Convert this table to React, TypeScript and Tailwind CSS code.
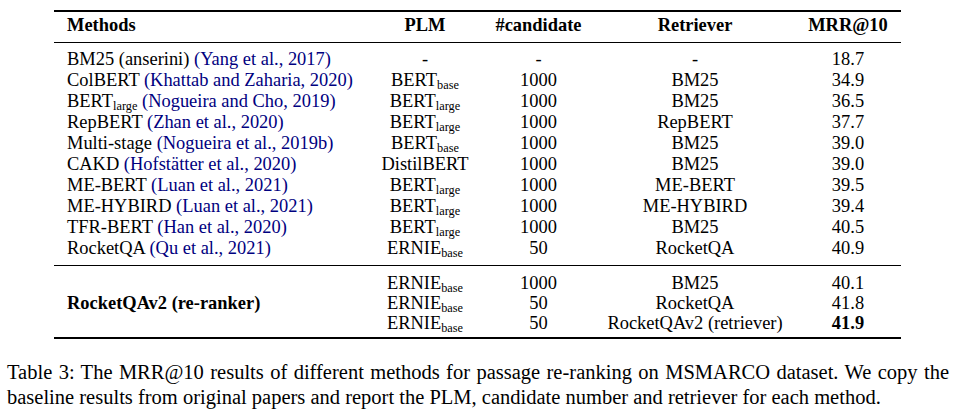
import React from "react";

interface Row {
  method: React.ReactNode;
  cite?: string;
  plm: React.ReactNode;
  cand: string;
  retriever: string;
  mrr: string;
}

const Sub = ({ children }: { children: React.ReactNode }) => (
  <span className="text-[12.3px] leading-[0] align-[-3px]">{children}</span>
);

const Plm = ({ name, sub }: { name: string; sub?: string }) => (
  <span>
    {name}
    {sub && <Sub>{sub}</Sub>}
  </span>
);

const baselines: Row[] = [
  { method: "BM25 (anserini)", cite: "Yang et al., 2017", plm: "-", cand: "-", retriever: "-", mrr: "18.7" },
  { method: "ColBERT", cite: "Khattab and Zaharia, 2020", plm: <Plm name="BERT" sub="base" />, cand: "1000", retriever: "BM25", mrr: "34.9" },
  {
    method: (
      <span>
        BERT<Sub>large</Sub>
      </span>
    ),
    cite: "Nogueira and Cho, 2019",
    plm: <Plm name="BERT" sub="large" />,
    cand: "1000",
    retriever: "BM25",
    mrr: "36.5",
  },
  { method: "RepBERT", cite: "Zhan et al., 2020", plm: <Plm name="BERT" sub="large" />, cand: "1000", retriever: "RepBERT", mrr: "37.7" },
  { method: "Multi-stage", cite: "Nogueira et al., 2019b", plm: <Plm name="BERT" sub="base" />, cand: "1000", retriever: "BM25", mrr: "39.0" },
  { method: "CAKD", cite: "Hofstätter et al., 2020", plm: "DistilBERT", cand: "1000", retriever: "BM25", mrr: "39.0" },
  { method: "ME-BERT", cite: "Luan et al., 2021", plm: <Plm name="BERT" sub="large" />, cand: "1000", retriever: "ME-BERT", mrr: "39.5" },
  { method: "ME-HYBIRD", cite: "Luan et al., 2021", plm: <Plm name="BERT" sub="large" />, cand: "1000", retriever: "ME-HYBIRD", mrr: "39.4" },
  { method: "TFR-BERT", cite: "Han et al., 2020", plm: <Plm name="BERT" sub="large" />, cand: "1000", retriever: "BM25", mrr: "40.5" },
  { method: "RocketQA", cite: "Qu et al., 2021", plm: <Plm name="ERNIE" sub="base" />, cand: "50", retriever: "RocketQA", mrr: "40.9" },
];

const ours = [
  { cand: "1000", retriever: "BM25", mrr: "40.1" },
  { cand: "50", retriever: "RocketQA", mrr: "41.8" },
  { cand: "50", retriever: "RocketQAv2 (retriever)", mrr: "41.9", best: true },
];

const grid = "grid grid-cols-[308px_126px_101px_212px_100px] items-center";

export default function App() {
  return (
    <div className="w-[954px] h-[417px] bg-white text-black font-['Liberation_Serif','Times_New_Roman',serif] overflow-hidden">
      <div className="pt-[10px] pl-[54px]">
        <div className="w-[847px]">
          <div className="h-[2px] bg-black" />
          <div className={`${grid} h-[21px] mt-[3px] mb-[6px] text-[18.45px] leading-[21px] font-bold`}>
            <div className="pl-[13px]">Methods</div>
            <div className="text-center">PLM</div>
            <div className="text-center">#candidate</div>
            <div className="text-center">Retriever</div>
            <div className="text-center pr-[6px]">MRR@10</div>
          </div>
          <div className="h-[1px] bg-black" />

          <div className="pt-[6px] pb-[6px] text-[18.45px] leading-[21px]">
            {baselines.map((r, i) => (
              <div key={i} className={`${grid} h-[21px]`}>
                <div className="pl-[13px] whitespace-nowrap">
                  {r.method} <span className="text-[#000080]">({r.cite})</span>
                </div>
                <div className="text-center whitespace-nowrap">{r.plm}</div>
                <div className="text-center">{r.cand}</div>
                <div className="text-center whitespace-nowrap">{r.retriever}</div>
                <div className="text-center pr-[6px]">{r.mrr}</div>
              </div>
            ))}
          </div>
          <div className="h-[1px] bg-black" />

          <div className={`${grid} pt-[7px] pb-[4px] text-[18.45px] leading-[20px]`}>
            <div className="row-span-3 pl-[13px] font-bold whitespace-nowrap">RocketQAv2 (re-ranker)</div>
            {ours.map((r, i) => (
              <React.Fragment key={i}>
                <div className="h-[20px] text-center whitespace-nowrap">
                  <Plm name="ERNIE" sub="base" />
                </div>
                <div className="h-[20px] text-center">{r.cand}</div>
                <div className="h-[20px] text-center whitespace-nowrap">{r.retriever}</div>
                <div className={`h-[20px] text-center pr-[6px] ${r.best ? "font-bold" : ""}`}>{r.mrr}</div>
              </React.Fragment>
            ))}
          </div>
          <div className="h-[2px] bg-black" />
        </div>
      </div>

      <p className="mt-[21px] ml-[7px] w-[942px] text-[20.5px] leading-[25px] text-justify">
        Table 3: The MRR@10 results of different methods for passage re-ranking on MSMARCO dataset. We copy the
        baseline results from original papers and report the PLM, candidate number and retriever for each method.
      </p>
    </div>
  );
}
